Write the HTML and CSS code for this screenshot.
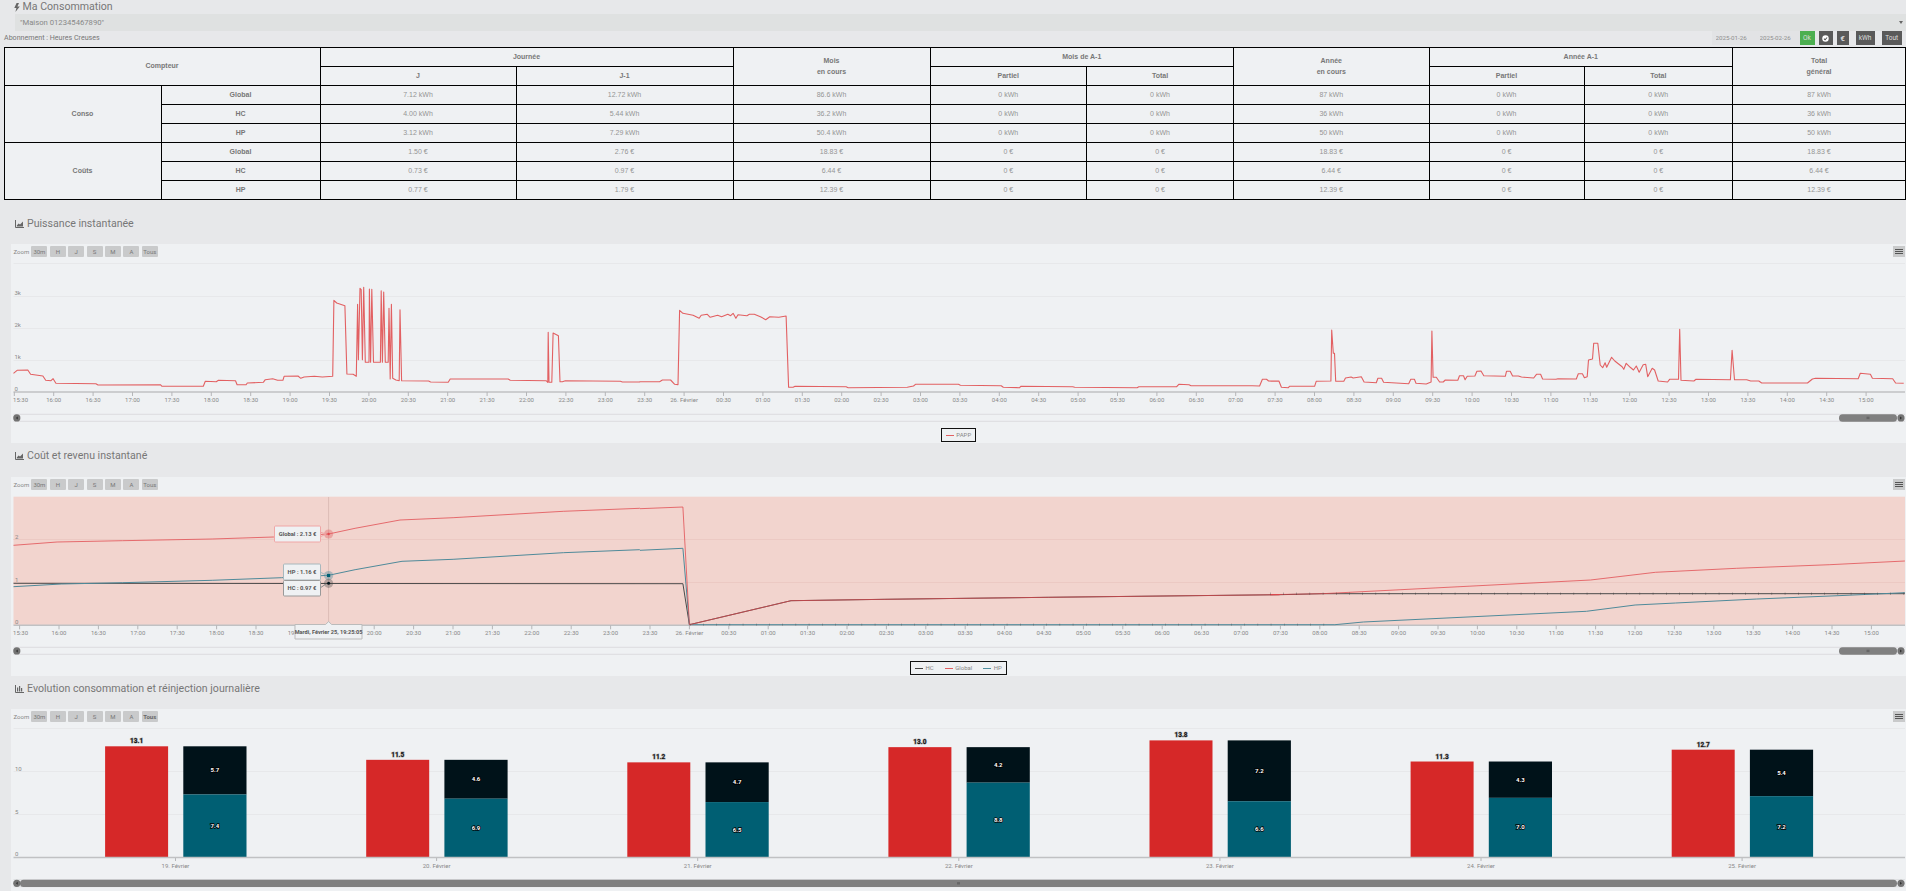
FILE: index.html
```html
<!DOCTYPE html>
<html lang="fr">
<head>
    <meta charset="UTF-8">
    <meta name="viewport" content="width=device-width, initial-scale=1.0">
    <title>Ma Consommation</title>
    <link rel="stylesheet" href="styles.css">
</head>
<body>
    <div class="title-row">
        <svg class="bolt-icon" viewBox="0 0 6 9"><path d="M2.6 0 0.3 5H2.4L1.4 9 5.8 3.4H3.4L5 0Z"/></svg>
        <span>Ma Consommation</span>
    </div>
    <div class="object-bar">
        <span>"Maison 012345467890"</span>
        <span class="caret"></span>
    </div>
    <div class="filter-row">
        <span class="subscription">Abonnement : Heures Creuses</span>
        <div class="date-range">
            <input class="date-input" type="text" value="2025-01-26">
            <input class="date-input" type="text" value="2025-02-26">
        </div>
        <button class="ok-button">Ok</button>
        <button class="dark-button btn-check"><svg viewBox="0 0 10 10"><circle cx="5" cy="5" r="4.6" fill="#fff"/><path d="M2.8 5.2 4.4 6.8 7.3 3.6" fill="none" stroke="#555" stroke-width="1.5"/></svg></button>
        <button class="dark-button btn-euro">€</button>
        <button class="dark-button btn-kwh">kWh</button>
        <button class="dark-button btn-all">Tout</button>
    </div>

    <table class="conso-table">
        <colgroup>
            <col><col><col><col><col><col><col><col><col><col><col>
        </colgroup>
        <thead>
            <tr>
                <th colspan="2" rowspan="2">Compteur</th>
                <th colspan="2">Journée</th>
                <th rowspan="2">Mois<br>en cours</th>
                <th colspan="2">Mois de A-1</th>
                <th rowspan="2">Année<br>en cours</th>
                <th colspan="2">Année A-1</th>
                <th rowspan="2">Total<br>général</th>
            </tr>
            <tr>
                <th>J</th><th>J-1</th><th>Partiel</th><th>Total</th><th>Partiel</th><th>Total</th>
            </tr>
        </thead>
        <tbody>
            <tr>
                <th rowspan="3">Conso</th><th>Global</th>
                <td>7.12 kWh</td><td>12.72 kWh</td><td>86.6 kWh</td><td>0 kWh</td><td>0 kWh</td><td>87 kWh</td><td>0 kWh</td><td>0 kWh</td><td>87 kWh</td>
            </tr>
            <tr>
                <th>HC</th>
                <td>4.00 kWh</td><td>5.44 kWh</td><td>36.2 kWh</td><td>0 kWh</td><td>0 kWh</td><td>36 kWh</td><td>0 kWh</td><td>0 kWh</td><td>36 kWh</td>
            </tr>
            <tr>
                <th>HP</th>
                <td>3.12 kWh</td><td>7.29 kWh</td><td>50.4 kWh</td><td>0 kWh</td><td>0 kWh</td><td>50 kWh</td><td>0 kWh</td><td>0 kWh</td><td>50 kWh</td>
            </tr>
            <tr>
                <th rowspan="3">Coûts</th><th>Global</th>
                <td>1.50 €</td><td>2.76 €</td><td>18.83 €</td><td>0 €</td><td>0 €</td><td>18.83 €</td><td>0 €</td><td>0 €</td><td>18.83 €</td>
            </tr>
            <tr>
                <th>HC</th>
                <td>0.73 €</td><td>0.97 €</td><td>6.44 €</td><td>0 €</td><td>0 €</td><td>6.44 €</td><td>0 €</td><td>0 €</td><td>6.44 €</td>
            </tr>
            <tr>
                <th>HP</th>
                <td>0.77 €</td><td>1.79 €</td><td>12.39 €</td><td>0 €</td><td>0 €</td><td>12.39 €</td><td>0 €</td><td>0 €</td><td>12.39 €</td>
            </tr>
        </tbody>
    </table>

    <h3 class="section-head section-head-tight">
        <svg class="head-icon" viewBox="0 0 9 8"><path d="M0.5 0V7.5H9" fill="none" stroke="#666"/><path d="M1.8 5.6 3.6 3.6 5 4.6 8 1.6V6.4H1.8Z" fill="#666"/></svg>
        <span>Puissance instantanée</span>
    </h3>
    <div class="chart-panel">
        <div class="range-row" data-active=""></div>
        <svg class="chart" id="powerChart" width="1895" height="166" viewBox="11 260 1895 166"></svg>
        <div class="legend">
            <span class="legend-item"><i class="swatch swatch-red"></i>PAPP</span>
        </div>
    </div>

    <h3 class="section-head">
        <svg class="head-icon" viewBox="0 0 9 8"><path d="M0.5 0V7.5H9" fill="none" stroke="#666"/><path d="M1.8 5.6 3.6 3.6 5 4.6 8 1.6V6.4H1.8Z" fill="#666"/></svg>
        <span>Coût et revenu instantané</span>
    </h3>
    <div class="chart-panel">
        <div class="range-row" data-active=""></div>
        <svg class="chart" id="costChart" width="1895" height="166" viewBox="11 493 1895 166"></svg>
        <div class="legend">
            <span class="legend-item"><i class="swatch swatch-dark"></i>HC</span>
            <span class="legend-item"><i class="swatch swatch-red"></i>Global</span>
            <span class="legend-item"><i class="swatch swatch-teal"></i>HP</span>
        </div>
    </div>

    <h3 class="section-head section-head-tight">
        <svg class="head-icon" viewBox="0 0 9 8"><path d="M0.5 0V7.5H9" fill="none" stroke="#666"/><path d="M2 2.5H3.2V6.4H2ZM4 1H5.2V6.4H4ZM6 3H7.2V6.4H6Z" fill="#666"/></svg>
        <span>Evolution consommation et réinjection journalière</span>
    </h3>
    <div class="chart-panel chart-panel-last">
        <div class="range-row" data-active="Tous"></div>
        <svg class="chart" id="dailyChart" width="1895" height="166" viewBox="11 725 1895 166"></svg>
    </div>

    <script src="app.js"></script>
</body>
</html>
```

FILE: styles.css
```css
html, body {
    height: 891px;
    overflow: hidden;
}
body {
    font-family: Roboto, sans-serif;
    background-color: #e7e8ea;
    color: #777;
    margin: 0;
}
.title-row {
    display: flex;
    align-items: center;
    gap: 2.5px;
    height: 14px;
    padding-left: 14px;
    font-size: 10.6px;
    line-height: 14px;
}
.bolt-icon {
    width: 6px;
    height: 9px;
    fill: #666;
}
.object-bar {
    display: flex;
    justify-content: space-between;
    align-items: center;
    height: 17px;
    margin-left: 15px;
    padding: 0 3px 0 5px;
    background-color: #dfe1e1;
    font-size: 7.7px;
    color: #888;
}
.caret {
    width: 0;
    height: 0;
    border-left: 2.5px solid transparent;
    border-right: 2.5px solid transparent;
    border-top: 3px solid #666;
}
.filter-row {
    display: flex;
    align-items: flex-start;
    height: 14px;
    padding: 0 4px;
    margin-bottom: 2px;
}
.subscription {
    font-size: 7.1px;
    line-height: 14px;
    margin-right: auto;
}
.date-range {
    display: flex;
    gap: 13px;
    width: 88px;
    height: 14px;
    padding-left: 4px;
    box-sizing: border-box;
    background-color: #e2e3e5;
}
.date-input {
    width: 31px;
    padding: 0;
    border: none;
    background: none;
    font-family: Roboto, sans-serif;
    font-size: 6.2px;
    color: #8f8f8f;
    outline: none;
}
.ok-button, .dark-button {
    display: flex;
    align-items: center;
    justify-content: center;
    height: 14px;
    padding: 0;
    border: none;
    color: #ddd;
    font-family: Roboto, sans-serif;
    font-size: 6.5px;
}
.ok-button {
    width: 15px;
    background-color: #4caf50;
}
.dark-button {
    background-color: #5a5a5a;
}
.btn-check {
    width: 14.5px;
    margin-left: 4px;
}
.btn-check svg {
    width: 7px;
    height: 7px;
}
.btn-euro {
    width: 12px;
    margin-left: 3.5px;
    font-weight: bold;
    font-size: 8px;
}
.btn-kwh {
    width: 19px;
    margin-left: 7px;
}
.btn-all {
    width: 20.5px;
    margin-left: 7px;
}

.conso-table {
    table-layout: fixed;
    border-collapse: collapse;
    width: 1902px;
    margin: 0 0 11px 3.5px;
    background-color: #eff1f3;
    font-family: "Liberation Sans", Arial, sans-serif;
    font-size: 7px;
    line-height: 10.3px;
    text-align: center;
}
.conso-table col:nth-child(1) { width: 157px; }
.conso-table col:nth-child(2) { width: 159px; }
.conso-table col:nth-child(3) { width: 196px; }
.conso-table col:nth-child(4) { width: 217px; }
.conso-table col:nth-child(5) { width: 197px; }
.conso-table col:nth-child(6) { width: 156.5px; }
.conso-table col:nth-child(7) { width: 147px; }
.conso-table col:nth-child(8) { width: 195.5px; }
.conso-table col:nth-child(9) { width: 155px; }
.conso-table col:nth-child(10) { width: 148.5px; }
.conso-table col:nth-child(11) { width: 173px; }
.conso-table tr {
    height: 19px;
}
.conso-table th, .conso-table td {
    border: 1px solid #000;
    padding: 0;
}
.conso-table th {
    color: #777;
    font-weight: bold;
}
.conso-table td {
    color: #959595;
}

.section-head {
    display: flex;
    align-items: flex-start;
    gap: 3px;
    height: 34px;
    margin: 0;
    padding-left: 15px;
    box-sizing: border-box;
    font-size: 10.6px;
    font-weight: normal;
    line-height: 26px;
}
.section-head-tight {
    height: 33px;
}
.head-icon {
    width: 9px;
    height: 8px;
    margin-top: 9px;
}
.chart-panel {
    height: 199px;
    margin-left: 11px;
    background-color: #eff1f3;
}
.chart-panel-last {
    height: 182px;
}
.range-row {
    display: flex;
    align-items: center;
    gap: 2.4px;
    height: 16px;
    padding: 2px 1px 3px 2.5px;
    box-sizing: border-box;
    font-size: 6px;
}
.range-label {
    width: 15.5px;
    color: #888;
}
.range-button {
    width: 16px;
    height: 11px;
    padding: 0;
    border: none;
    border-radius: 1px;
    background-color: #c9cacb;
    color: #777;
    font-family: Roboto, sans-serif;
    font-size: 6px;
}
.range-button.active {
    font-weight: bold;
    color: #666;
}
.menu-button {
    display: flex;
    flex-direction: column;
    justify-content: center;
    gap: 1.4px;
    width: 12px;
    height: 11px;
    margin-left: auto;
    padding: 0 2px;
    box-sizing: border-box;
    background-color: #c9cacb;
}
.menu-button i {
    display: block;
    height: 1px;
    background-color: #555;
}
.chart {
    display: block;
}
.chart text {
    font-family: Roboto, sans-serif;
    font-size: 6px;
    fill: #888;
}
.chart .tooltip-text {
    font-size: 5.8px;
    font-weight: bold;
    fill: #555;
}
.chart .date-text {
    font-size: 5.6px;
    font-weight: bold;
    fill: #555;
}
.chart .bar-label {
    font-size: 6px;
    font-weight: bold;
    fill: #fff;
    stroke: #000;
    stroke-width: 1.5px;
    paint-order: stroke;
}
.chart .sum-label {
    font-size: 6.5px;
    font-weight: bold;
    fill: #111;
    stroke: #aaa;
    stroke-width: 1px;
    paint-order: stroke;
}
.legend {
    display: flex;
    justify-content: center;
    gap: 11px;
    width: fit-content;
    height: 14px;
    margin: 2px auto 0;
    padding: 0 4px;
    box-sizing: border-box;
    border: 1px solid #111;
    font-size: 6px;
    line-height: 12px;
    color: #888;
}
.legend-item {
    display: flex;
    align-items: center;
    gap: 2.5px;
}
.swatch {
    display: block;
    width: 8px;
    height: 1px;
}
.swatch-red { background-color: #e26062; }
.swatch-dark { background-color: #444; }
.swatch-teal { background-color: #4f8fa0; }
```

FILE: app.js
```js
const RED = '#e26062';
const DARK = '#4a4a4a';
const TEAL = '#4f8a9a';
const PLOT_LEFT = 13.5;
const PLOT_RIGHT = 1905;
const TICK_STEP = 39.4;

// points relevés sur la capture, échelle x / y différente selon le morceau
function scale(points, x0, sx, y0) {
    return points.map(([x, y]) => [x0 + x / sx, y0 + y / 3]);
}

function polyline(points, color, width, extra) {
    const list = points.map(p => p[0].toFixed(1) + ',' + p[1].toFixed(1)).join(' ');
    return `<polyline points="${list}" fill="none" stroke="${color}" stroke-width="${width || 1}" stroke-linejoin="round" ${extra || ''}/>`;
}

function rect(x, y, w, h, fill, extra) {
    return `<rect x="${x}" y="${y}" width="${w}" height="${h}" fill="${fill}" ${extra || ''}/>`;
}

function hLine(x1, x2, y, color, width) {
    return `<line x1="${x1}" x2="${x2}" y1="${y}" y2="${y}" stroke="${color}" stroke-width="${width || 1}"/>`;
}

function vLine(x, y1, y2, color) {
    return `<line x1="${x}" x2="${x}" y1="${y1}" y2="${y2}" stroke="${color}"/>`;
}

function label(x, y, text, cls, anchor) {
    return `<text x="${x}" y="${y}" text-anchor="${anchor || 'middle'}" class="${cls || ''}">${text}</text>`;
}

// covered : index du libellé caché sous l'infobulle de date
function timeAxis(x0, y, labelY, covered) {
    let out = hLine(PLOT_LEFT, PLOT_RIGHT, y, '#c0c1c3', 1.4);
    for (let i = 0; i < 48; i++) {
        const minutes = 15 * 60 + 30 + i * 30;
        const h = Math.floor(minutes / 60) % 24;
        const m = minutes % 60;
        const text = i === 17 ? '26. Février' : String(h).padStart(2, '0') + ':' + String(m).padStart(2, '0');
        const x = x0 + i * TICK_STEP;
        out += vLine(x, y, y + 4, '#b5b6b8');
        if (i === covered) {
            out += label(x - 1, labelY, '19', '', 'end');
        } else if (i !== covered + 1 || covered === undefined) {
            out += label(i === 0 ? 20.6 : x, labelY, text);
        }
    }
    return out;
}

function handle(x, y, dir) {
    const arrow = dir < 0
        ? `M${x + 1} ${y - 1.5}L${x - 1} ${y}L${x + 1} ${y + 1.5}Z`
        : `M${x - 1} ${y - 1.5}L${x + 1} ${y}L${x - 1} ${y + 1.5}Z`;
    return `<circle cx="${x}" cy="${y}" r="3.6" fill="#737373"/><path d="${arrow}" fill="#333"/>`;
}

function scrollbar(top, thumbLeft) {
    const mid = top + 3.6;
    let out = hLine(PLOT_LEFT, PLOT_RIGHT, top, '#dcdddf') + hLine(PLOT_LEFT, PLOT_RIGHT, top + 7, '#dcdddf');
    out += rect(thumbLeft, top, 1897 - thumbLeft, 7.4, '#808080', 'rx="3.5"');
    const grip = (thumbLeft + 1897) / 2;
    out += rect(grip - 1.5, mid - 1.2, 3, 2.4, '#666');
    out += handle(16.8, mid, -1) + handle(1901, mid, 1);
    return out;
}

function buildRangeRows() {
    document.querySelectorAll('.range-row').forEach(row => {
        let html = '<span class="range-label">Zoom</span>';
        ['30m', 'H', 'J', 'S', 'M', 'A', 'Tous'].forEach(name => {
            const active = row.dataset.active === name ? ' active' : '';
            html += `<button class="range-button${active}">${name}</button>`;
        });
        html += '<div class="menu-button"><i></i><i></i><i></i></div>';
        row.innerHTML = html;
    });
}

function drawPowerChart() {
    const a = scale([[33,490],[42,481],[68,480],[75,493],[105,498],[112,511],[125,512],[130,506],[137,520],[235,521],[240,525],[393,524],[397,529],[498,529],[503,514],[530,515],[535,511],[577,512],[581,524],[603,524],[606,519],[645,517],[650,509],[668,506],[680,511],[693,511],[696,499],[730,498],[737,505],[745,501],[770,499],[790,501],[815,499],[818,271],[825,279],[845,287],[850,492],[865,493],[873,499],[876,283],[878,449],[882,235],[885,239],[888,449],[891,232],[895,457],[904,457],[905,237],[908,457],[911,238],[915,457],[932,457],[934,242],[937,457],[940,246],[944,457],[951,457],[953,295],[956,507],[959,283],[962,505],[970,510],[978,512],[980,299],[984,512],[1050,513],[1055,516],[1098,517],[1103,507],[1245,507],[1250,511],[1338,512],[1342,517],[1343,367],[1345,517],[1352,517],[1355,369],[1368,377],[1372,515],[1378,515],[1385,512],[1520,514],[1525,516],[1567,516]], 0, 2.45, 210);
    const b = scale([[0,305],[48,305],[55,300],[75,300],[85,313],[93,314],[97,91],[105,100],[130,106],[145,115],[150,106],[165,103],[172,112],[190,106],[200,110],[215,103],[222,107],[228,100],[235,115],[240,104],[262,107],[268,103],[280,103],[295,110],[308,119],[318,110],[340,112],[358,108],[364,322],[375,322],[380,319],[505,320],[510,323],[655,322],[670,318],[675,313],[780,313],[785,316],[885,317],[890,322],[930,323],[933,319],[1060,320],[1065,322],[1218,323],[1222,320],[1315,320],[1320,313],[1345,314],[1350,317],[1500,317],[1518,318],[1525,298],[1535,298],[1540,303],[1565,304]], 640, 2.45, 280);
    const c = scale([[0,304],[22,303],[28,322],[45,323],[48,319],[110,319],[114,304],[150,303],[152,150],[156,220],[159,220],[162,304],[182,304],[186,294],[200,291],[205,294],[225,290],[232,306],[262,308],[266,295],[275,295],[280,307],[342,311],[347,298],[356,298],[360,310],[385,312],[397,306],[399,153],[402,292],[410,292],[418,306],[427,306],[432,300],[463,301],[467,287],[477,287],[481,299],[486,289],[505,288],[510,274],[520,273],[527,287],[580,289],[583,274],[592,274],[598,288],[612,288],[620,291],[650,294],[657,283],[667,283],[672,297],[705,298],[710,296],[755,297],[760,281],[770,281],[775,293],[782,290],[785,240],[795,237],[798,190],[808,190],[814,255],[820,263],[826,248],[830,262],[842,232],[850,243],[868,260],[872,268],[878,250],[888,262],[896,270],[903,258],[910,277],[920,254],[926,253],[931,290],[942,265],[948,270],[957,303],[980,306],[985,298],[1007,298],[1010,148],[1013,301],[1045,303],[1050,298],[1135,299],[1139,211],[1145,299],[1175,299],[1185,303],[1205,303],[1212,309],[1325,309],[1337,297],[1345,295],[1450,296],[1455,280],[1480,283],[1485,295],[1535,296],[1542,309],[1562,310]], 1270, 2.465, 280);

    let out = '';
    [263.5, 296.5, 328.5, 360.5].forEach(y => { out += hLine(PLOT_LEFT, PLOT_RIGHT, y, '#e7e8ea'); });
    [['3k', 295], ['2k', 327], ['1k', 359], ['0', 391]].forEach(([t, y]) => {
        out += label(14.5, y, t, '', 'start');
    });
    out += timeAxis(14.3, 392, 402);
    out += polyline(a.concat(b, c), RED, 1.1);
    out += scrollbar(414.3, 1839);
    document.getElementById('powerChart').innerHTML = out;
}

function tooltip(x, y, w, h, border, text) {
    return rect(x, y, w, h, '#eff1f3', `stroke="${border}" rx="1"`) + label(x + w / 2, y + h / 2 + 2.1, text, 'tooltip-text');
}

function drawCostChart() {
    const drop = [[689.4, 624.7]];
    const global = scale([[33,316],[140,306],[300,302],[520,297],[670,291],[805,282],[870,265],[980,240],[1110,233],[1380,214],[1567,205]], 0, 2.45, 440)
        .concat(scale([[0,86],[105,81],[121,434],[370,362],[600,358],[1000,352],[1567,344]], 640, 2.45, 480))
        .concat(scale([[0,344],[130,341],[790,300],[950,277],[1150,265],[1380,254],[1565,243]], 1270, 2.465, 480));
    const hp = scale([[33,440],[150,432],[300,428],[520,421],[690,413],[805,406],[870,389],[985,364],[1110,358],[1380,338],[1567,329]], 0, 2.45, 440)
        .concat(scale([[0,211],[105,205]], 640, 2.45, 480), drop)
        .concat(scale([[0,434],[160,434],[230,426],[780,394],[900,375],[1000,369],[1200,357],[1400,347],[1565,338]], 1270, 2.465, 480));
    const hc = [[PLOT_LEFT, 583.3]]
        .concat(scale([[105,311]], 640, 2.45, 480), drop)
        .concat(scale([[370,362],[600,358],[1000,352],[1567,344]], 640, 2.45, 480))
        .concat(scale([[130,341],[1565,341]], 1270, 2.465, 480));

    const crossX = 328.6;
    let out = rect(PLOT_LEFT, 496.7, PLOT_RIGHT - PLOT_LEFT, 128.3, '#f2d4ce');
    out += hLine(PLOT_LEFT, PLOT_RIGHT, 539.5, '#ecc9c3') + hLine(PLOT_LEFT, PLOT_RIGHT, 582.5, '#ecc9c3');
    [['2', 539], ['1', 582], ['0', 624]].forEach(([t, y]) => { out += label(15, y, t, '', 'start'); });
    out += timeAxis(19.6, 625.3, 635, 7);
    out += vLine(crossX, 497, 625, '#dcbcb6');
    out += polyline(hc, DARK);
    out += polyline(hp, TEAL);
    out += polyline(global, '#e0474c', 1, 'stroke-opacity="0.75"');
    // petits repères des points de mesure
    out += polyline([[1270, 593.7], [PLOT_RIGHT, 593.7]], '#333', 2.4, 'stroke-dasharray="0.5 12.7" stroke-opacity="0.6"');
    out += polyline([[690, 624.6], [1335, 624.6]], '#333', 2.4, 'stroke-dasharray="0.5 12.7" stroke-opacity="0.5"');

    out += `<circle cx="${crossX}" cy="534" r="4.6" fill="${RED}" fill-opacity="0.4"/><circle cx="${crossX}" cy="534" r="1.2" fill="#e0474c"/>`;
    out += `<circle cx="${crossX}" cy="575.5" r="4.6" fill="${TEAL}" fill-opacity="0.4"/>` + rect(crossX - 1.6, 573.9, 3.2, 3.2, '#005f73');
    out += `<circle cx="${crossX}" cy="583.3" r="4.6" fill="#444" fill-opacity="0.35"/><circle cx="${crossX}" cy="583.3" r="1.5" fill="#001219"/>`;

    out += polyline([[320, 532], [326, 534], [320, 537]], '#f0a6a6');
    out += polyline([[320, 572], [326, 575]], '#a8b8bd') + polyline([[320, 588], [326, 584]], '#888');
    out += tooltip(274.5, 526, 46, 16, '#f0a6a6', 'Global : 2.13 €');
    out += tooltip(283.5, 564, 37, 16, '#a8b8bd', 'HP : 1.16 €');
    out += tooltip(283.5, 580.5, 37, 15.5, '#999', 'HC : 0.97 €');

    out += `<path d="M295 624.5H325.6L328.6 621.5L331.6 624.5H362V639H295Z" fill="#eff1f3" stroke="#bbb"/>`;
    out += label(328.5, 634, 'Mardi, Février 25, 19:25:05', 'date-text');
    out += scrollbar(647.3, 1839);
    document.getElementById('costChart').innerHTML = out;
}

function drawDailyChart() {
    const days = [
        ['19. Février', 5.7, 7.4, 13.1],
        ['20. Février', 4.6, 6.9, 11.5],
        ['21. Février', 4.7, 6.5, 11.2],
        ['22. Février', 4.2, 8.8, 13.0],
        ['23. Février', 7.2, 6.6, 13.8],
        ['24. Février', 4.3, 7.0, 11.3],
        ['25. Février', 5.4, 7.2, 12.7]
    ];
    const base = 857;
    const perUnit = 8.45;
    let out = '';
    [728.5, 771.5, 814.5].forEach(y => { out += hLine(PLOT_LEFT, PLOT_RIGHT, y, '#e7e8ea'); });
    [['10', 771], ['5', 814], ['0', 856]].forEach(([t, y]) => { out += label(15, y, t, '', 'start'); });

    days.forEach(([name, hc, hp, sum], i) => {
        const tick = 175.5 + 261.1 * i;
        const hpH = hp * perUnit;
        const total = sum * perUnit;
        const hcH = total - hpH;
        const left = tick - 70.4;
        const right = tick + 7.8;
        out += rect(left, base - total, 63, total, '#d62828');
        out += rect(right, base - total, 63.2, hcH, '#001219');
        out += rect(right, base - hpH, 63.2, hpH, '#005f73');
        out += label(left + 31.5, base - total - 3, sum.toFixed(1), 'sum-label');
        out += label(right + 31.6, base - hpH - hcH / 2 + 2, hc.toFixed(1), 'bar-label');
        out += label(right + 31.6, base - hpH / 2 + 2, hp.toFixed(1), 'bar-label');
        out += vLine(tick, base, base + 4, '#b5b6b8');
        out += label(tick, base + 10.5, name);
    });
    out += hLine(PLOT_LEFT, PLOT_RIGHT, base + 0.5, '#c0c1c3', 1.4);
    out += scrollbar(879.7, 20);
    document.getElementById('dailyChart').innerHTML = out;
}

buildRangeRows();
drawPowerChart();
drawCostChart();
drawDailyChart();
```
